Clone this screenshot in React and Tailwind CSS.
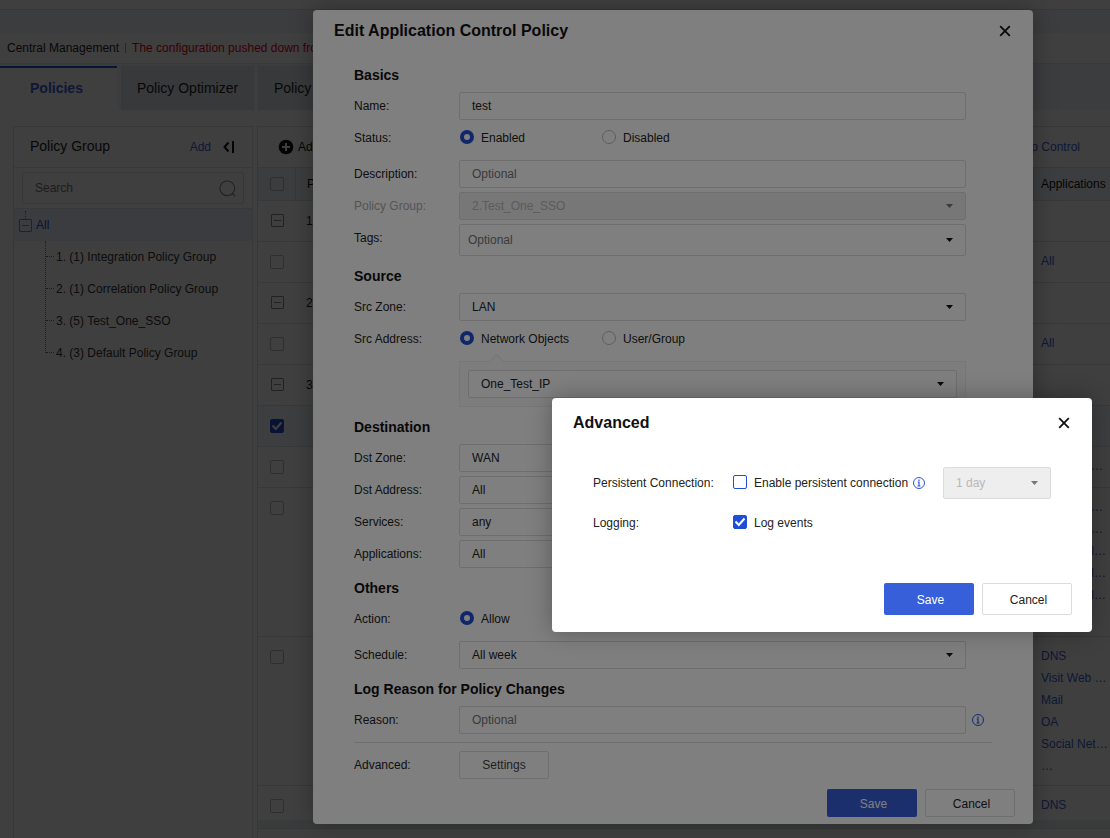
import clsx from "clsx";

const treeItems = [
  "1. (1) Integration Policy Group",
  "2. (1) Correlation Policy Group",
  "3. (5) Test_One_SSO",
  "4. (3) Default Policy Group",
];

const tableRows = [
  { type: "group", no: "1" },
  { type: "item", apps: ["All"] },
  { type: "group", no: "2" },
  { type: "item", apps: ["All"] },
  { type: "group", no: "3" },
  { type: "item", checked: true },
  { type: "item", apps: ["…"], clipped: true },
  { type: "item", apps: ["…", "…", "l…", "l…", "l…"], clipped: true, tall: true },
  { type: "item", apps: ["DNS", "Visit Web …", "Mail", "OA", "Social Net…", "…"], tall: true },
  { type: "item", apps: ["DNS"] },
];

function Close() {
  return (
    <svg width="12" height="12" viewBox="0 0 12 12" fill="none" stroke="#111" strokeWidth="1.8">
      <path d="M1.2 1.2L10.8 10.8M10.8 1.2L1.2 10.8" />
    </svg>
  );
}

function Caret({ color = "#111" }) {
  return (
    <svg width="7" height="4" viewBox="0 0 7 4" fill={color}>
      <path d="M0 0H7L3.5 4Z" />
    </svg>
  );
}

function Info() {
  return (
    <svg width="12" height="12" viewBox="0 0 12 12" fill="none" stroke="#2d55d7">
      <circle cx="6" cy="6" r="5.5" />
      <path d="M6 2.5V4M4.7 5H6V9M4.5 9H7.5" strokeWidth="1.2" />
    </svg>
  );
}

function Checkbox({ checked, blue, className }) {
  return (
    <span
      className={clsx(
        "flex h-3.5 w-3.5 shrink-0 items-center justify-center rounded-[2px] border",
        checked ? "border-[#204ed9] bg-[#204ed9]" : blue ? "border-[#204ed9] bg-white" : "border-[#bbb]",
        className
      )}
    >
      {checked && (
        <svg width="12" height="12" viewBox="0 0 12 12" fill="none" stroke="#fff" strokeWidth="2" className="shrink-0">
          <path d="M1.5 5.5L4.8 9L10.5 2.5" />
        </svg>
      )}
    </span>
  );
}

function Minus() {
  return (
    <span className="flex h-[13px] w-[13px] shrink-0 items-center justify-center rounded-[1px] border border-[#888]">
      <span className="h-px w-[7px] bg-[#888]" />
    </span>
  );
}

function Radio({ checked, children, className }) {
  return (
    <span className={clsx("flex items-center gap-[7px]", className)}>
      <span
        className={clsx(
          "mb-0.5 h-3.5 w-3.5 rounded-full",
          checked ? "border-4 border-[#204ed9] bg-white" : "border border-[#bbb]"
        )}
      />
      {children}
    </span>
  );
}

function Field({ label, children, className, disabled }) {
  return (
    <div className={clsx("flex items-start", className)}>
      <span className={clsx("h-7 w-[105px] shrink-0 leading-[29px]", disabled && "text-[#aaa]")}>{label}</span>
      {children}
    </div>
  );
}

function Box({ children, select, placeholder, disabled, className = "h-7 w-[507px] pl-3" }) {
  return (
    <div
      className={clsx(
        "flex items-center justify-between rounded-[2px] border border-[#dcdcdc] pr-3",
        disabled ? "bg-[#eee] text-[#b8b8b8]" : placeholder ? "text-[#757575]" : "",
        className
      )}
    >
      <span>{children}</span>
      {select && <Caret color={disabled ? "#777" : "#111"} />}
    </div>
  );
}

function Heading({ children, className }) {
  return <h3 className={clsx("h-5 text-sm font-bold leading-5 text-[#111]", className)}>{children}</h3>;
}

function Buttons({ className, height }) {
  return (
    <div className={clsx("flex justify-end gap-2", className)}>
      <button className={clsx("w-[90px] rounded-[2px] bg-[#375fd9] pl-[3px] pt-0.5 text-white", height)}>Save</button>
      <button className={clsx("w-[90px] rounded-[2px] border border-[#dcdcdc] pl-[3px] pt-0.5", height)}>Cancel</button>
    </div>
  );
}

function PolicyTree() {
  return (
    <aside className="h-[712px] w-60 shrink-0 border border-b-0 border-[#dfe1e6]">
      <div className="flex h-10 items-center pl-4 pr-[17px]">
        <span className="pb-0.5 text-sm">Policy Group</span>
        <span className="ml-auto text-[#3a5fd8]">Add</span>
        <svg width="12" height="12" viewBox="0 0 12 12" fill="none" stroke="#111" strokeWidth="2" className="ml-3">
          <path d="M5.5 1.5L1.5 6L5.5 10.5M10 0V12" />
        </svg>
      </div>
      <div className="h-[42px] border-y border-[#dfe1e6] px-2 pt-1">
        <div className="flex h-8 items-center justify-between rounded-[2px] border border-[#dcdcdc] pl-3 pr-[7px] text-[#757575]">
          Search
          <svg width="17" height="17" viewBox="0 0 18 18" fill="none" stroke="#888" strokeWidth="1.2">
            <circle cx="8.8" cy="8.8" r="7.8" />
            <path d="M14.3 14.3L17 17" />
          </svg>
        </div>
      </div>
      <div className="relative flex h-8 items-center bg-[#edf0fc] pl-[5px] text-[#204ed9]">
        <span className="absolute left-[11px] top-0.5 h-2 border-l border-dotted border-[#777]" />
        <Minus />
        <span className="ml-1">All</span>
      </div>
      <div className="relative">
        <span className="absolute left-[31px] top-0 h-28 border-l border-dotted border-[#777]" />
        {treeItems.map((item) => (
          <div key={item} className="flex h-8 items-center pl-8 text-[#333]">
            <span className="mb-px mr-0.5 w-2 border-t border-dotted border-[#777]" />
            {item}
          </div>
        ))}
      </div>
    </aside>
  );
}

function PolicyTable() {
  return (
    <section className="h-[712px] min-w-0 flex-1 border-l border-t border-[#dfe1e6]">
      <div className="flex h-10 items-center pl-5">
        <svg width="16" height="16" viewBox="0 0 16 16">
          <circle cx="8" cy="8" r="7.3" fill="#111" />
          <path d="M8 4V12M4 8H12" stroke="#fff" strokeWidth="2" />
        </svg>
        <span className="ml-1 text-[#111]">Add</span>
        <span className="ml-auto pr-[30px] text-[#3a5fd8]">App Control</span>
      </div>
      <div className="flex h-[34px] items-center border-y border-[#dfe1e6] bg-[#f2f6fa] text-[#111]">
        <span className="flex h-full w-[38px] items-center border-r border-[#dfe1e6] pl-3">
          <Checkbox />
        </span>
        <span className="pl-[11px]">Priority</span>
        <span className="ml-auto flex h-full w-[77px] items-center border-l border-[#dfe1e6] pl-[7px]">
          Applications
        </span>
      </div>
      {tableRows.map((row, i) => (
        <div
          key={i}
          className={clsx(
            "flex items-start overflow-hidden border-b border-[#dfe1e6]",
            row.tall ? "h-[149px]" : i === tableRows.length - 1 ? "h-[34px] border-b-0" : "h-[41px]",
            row.checked && "bg-[#f5f8fc]"
          )}
        >
          <span className="w-[48px] shrink-0 pl-3 pt-[13px]">
            {row.type === "group" ? (
              <span className="block pl-px">
                <Minus />
              </span>
            ) : (
              <Checkbox checked={row.checked} />
            )}
          </span>
          <span className="pt-[11px] leading-[18px]">{row.no}</span>
          <div className="ml-auto w-[69px] pt-2 leading-[22px] text-[#3a5fd8]">
            {row.apps?.map((app, n) => (
              <div
                key={n}
                className={clsx(row.clipped && "text-right", row.clipped && (app === "…" ? "pr-[7px]" : "pr-1"))}
              >
                {app}
              </div>
            ))}
          </div>
        </div>
      ))}
      <div className="h-2 rounded-l bg-[#e8ecee]" />
      <div className="border-t border-[#dfe1e6]" />
    </section>
  );
}

function Page() {
  return (
    <div className="h-full bg-white text-[#222]">
      <div className="h-2.5 border-b border-[#dedede]" />
      <div className="h-[23px] bg-[#f2f5fa]" />
      <div className="flex h-[31px] items-center whitespace-nowrap border-b border-[#e6e6e6] pl-[7px]">
        <span>Central Management</span>
        <span className="mx-1.5 h-2.5 w-px bg-[#999]" />
        <span className="text-[#e60012]">The configuration pushed down from Central Manager</span>
      </div>
      <div className="flex h-[46px] gap-1 bg-[#f2f5fa] pt-0.5 text-sm">
        <div className="w-[117px] border-t-2 border-[#204ed9] bg-white pl-[30px] pt-2.5 font-bold text-[#3a5fd8]">Policies</div>
        <div className="w-[133px] bg-[#e3e7ee] pl-4 pt-3">Policy Optimizer</div>
        <div className="w-[133px] bg-[#e3e7ee] pl-4 pt-3">Policy Logs</div>
      </div>
      <div className="flex gap-1 pl-[13px] pt-4">
        <PolicyTree />
        <PolicyTable />
      </div>
    </div>
  );
}

function EditPolicyDialog() {
  return (
    <div className="absolute left-[313px] top-2.5 h-[814px] w-[720px] rounded bg-white text-[#222] shadow-[0_0_24px_rgba(0,0,0,0.3)]">
      <div className="flex h-[41px] items-center justify-between pl-[21px] pr-[22px]">
        <h2 className="text-base font-bold text-[#111]">Edit Application Control Policy</h2>
        <Close />
      </div>
      <div className="pl-[41px]">
        <Heading className="mt-3.5">Basics</Heading>
        <Field label="Name:" className="mt-[7px]">
          <Box>test</Box>
        </Field>
        <Field label="Status:" className="mt-1">
          <Radio checked className="h-[27px] w-[143px] pl-px">Enabled</Radio>
          <Radio className="h-[27px]">Disabled</Radio>
        </Field>
        <Field label="Description:" className="mt-2">
          <Box placeholder>Optional</Box>
        </Field>
        <Field label="Policy Group:" disabled className="mt-1">
          <Box select disabled>2.Test_One_SSO</Box>
        </Field>
        <Field label="Tags:" className="mt-1">
          <Box select placeholder className="h-8 w-[507px] pl-2">Optional</Box>
        </Field>

        <Heading className="mt-2.5">Source</Heading>
        <Field label="Src Zone:" className="mt-[7px]">
          <Box select>LAN</Box>
        </Field>
        <Field label="Src Address:" className="mt-1">
          <Radio checked className="h-[27px] w-[143px] pl-px">Network Objects</Radio>
          <Radio className="h-[27px]">User/Group</Radio>
        </Field>
        <div className="relative ml-[105px] mt-2 h-[46px] w-[507px] border border-[#eee] bg-[#fafafa] p-2">
          <span className="absolute left-8 top-[-6px] h-2.5 w-2.5 rotate-45 border-l border-t border-[#eee] bg-[#fafafa]" />
          <Box select className="relative h-7 w-[489px] bg-white pl-3">One_Test_IP</Box>
        </div>

        <Heading className="mt-2.5">Destination</Heading>
        <Field label="Dst Zone:" className="mt-[7px]">
          <Box select>WAN</Box>
        </Field>
        <Field label="Dst Address:" className="mt-1">
          <Box select>All</Box>
        </Field>
        <Field label="Services:" className="mt-1">
          <Box select>any</Box>
        </Field>
        <Field label="Applications:" className="mt-1">
          <Box select>All</Box>
        </Field>

        <Heading className="mt-2.5">Others</Heading>
        <Field label="Action:" className="mt-[7px]">
          <Radio checked className="h-[27px] w-[143px] pl-px">Allow</Radio>
          <Radio className="h-[27px]">Deny</Radio>
        </Field>
        <Field label="Schedule:" className="mt-2">
          <Box select>All week</Box>
        </Field>

        <Heading className="mt-2.5">Log Reason for Policy Changes</Heading>
        <Field label="Reason:" className="mt-[7px]">
          <Box placeholder>Optional</Box>
          <span className="ml-1.5 mt-2">
            <Info />
          </span>
        </Field>
        <div className="mt-2 w-[638px] border-t border-[#dcdce4]" />
        <Field label="Advanced:" className="mt-2">
          <button className="h-7 w-[90px] rounded-[2px] border border-[#dcdcdc] text-[#444]">Settings</button>
        </Field>
      </div>
      <Buttons className="mt-2.5 pr-[18px]" height="h-7" />
    </div>
  );
}

function AdvancedDialog() {
  return (
    <div className="absolute left-[552px] top-[398px] h-[234px] w-[540px] rounded bg-white text-[#222] shadow-[0_0_24px_rgba(0,0,0,0.3)]">
      <div className="flex h-[49px] items-center justify-between pl-[21px] pr-[22px]">
        <h2 className="text-base font-bold text-[#111]">Advanced</h2>
        <Close />
      </div>
      <div className="mt-5 flex h-8 items-center pl-[41px]">
        <span className="w-[140px]">Persistent Connection:</span>
        <Checkbox blue className="mb-0.5" />
        <span className="ml-[7px] mr-[5px]">Enable persistent connection</span>
        <Info />
        <Box select disabled className="ml-auto mr-[41px] h-8 w-[108px] pl-3">1 day</Box>
      </div>
      <div className="mt-2 flex h-8 items-center pl-[41px]">
        <span className="w-[140px]">Logging:</span>
        <Checkbox checked className="mb-0.5" />
        <span className="ml-[7px]">Log events</span>
      </div>
      <Buttons className="mt-11 pr-5" height="h-8" />
    </div>
  );
}

export default function App() {
  return (
    <div className="relative h-[838px] w-[1110px] overflow-hidden font-['Liberation_Sans',Arial,sans-serif] text-xs">
      <Page />
      <div className="absolute inset-0 bg-black/50" />
      <EditPolicyDialog />
      <div className="absolute inset-0 bg-black/50" />
      <AdvancedDialog />
    </div>
  );
}
